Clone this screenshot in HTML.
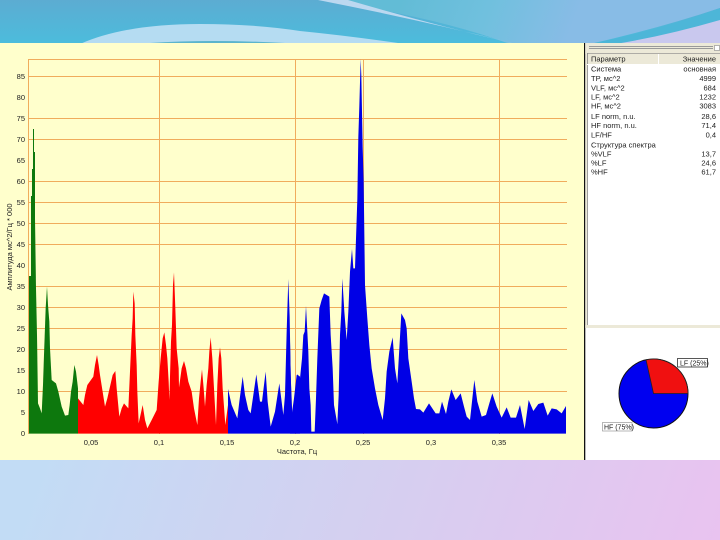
<!DOCTYPE html>
<html><head><meta charset="utf-8"><style>
html,body{margin:0;padding:0;background:#cfd4f0}
svg{display:block}
text{font-family:"Liberation Sans",sans-serif;font-size:7.5px;fill:#222}
</style></head><body>
<svg width="720" height="540" viewBox="0 0 720 540" xmlns="http://www.w3.org/2000/svg">
<defs>
<linearGradient id="bot" gradientUnits="userSpaceOnUse" x1="60" y1="400" x2="690" y2="620"><stop offset="0" stop-color="#c2dcf5"/><stop offset=".5" stop-color="#d5cff0"/><stop offset="1" stop-color="#e9c3f0"/></linearGradient>
<linearGradient id="top" gradientUnits="userSpaceOnUse" x1="0" y1="0" x2="0" y2="43"><stop offset="0" stop-color="#5cacd2"/><stop offset="1" stop-color="#4cbcdc"/></linearGradient>
<linearGradient id="top2" gradientUnits="userSpaceOnUse" x1="400" y1="0" x2="560" y2="60"><stop offset="0" stop-color="#62bcd6"/><stop offset=".5" stop-color="#70c0de"/><stop offset="1" stop-color="#88bce6"/></linearGradient>
<filter id="b"><feGaussianBlur stdDeviation="0.3"/></filter>
</defs>
<rect width="720" height="540" fill="url(#bot)"/>
<rect width="720" height="44" fill="url(#top)"/>
<path d="M80 44Q125 24 200 24Q255 24 300 31Q350 36 405 44Z" fill="#b5dcf2"/>
<path d="M150 43Q210 39 285 43Z" fill="#5bb4cc"/>
<path d="M318 0H720V8Q660 28 590 44H510Q430 15 318 0Z" fill="url(#top2)"/>
<path d="M318 0H348Q430 24 512 43Q420 20 318 0Z" fill="#bcd8f0"/>
<path d="M590 44Q660 30 720 8V20Q665 36 615 44Z" fill="#4db6d8"/>
<path d="M615 44Q665 36 720 20V44Z" fill="#c9c8ee"/>
<rect x="0" y="43" width="584" height="417" fill="#ffffcc"/>
<g stroke="#f0ac5c" stroke-width="1" fill="none">
<path d="M28 59.500H567M28 76.500H567M28 118.500H567M28 139.500H567M28 181.500H567M28 202.500H567M28 223.500H567M28 244.500H567M28 286.500H567M28 307.500H567M28 328.500H567M28 349.500H567M28 391.500H567"/>
<path d="M28.500 59V434M159.500 59V434M295.500 59V434M363.500 59V434M499.500 59V434"/>
</g>
<g filter="url(#b)">
<g transform="translate(0,225) scale(.33333)">
<polygon fill="#0a780a" points="87,626 87,153 93,153 93,-87 96,-87 96,-168 99,-168 99,-288 102,-288 102,-219 105,-219 105,-20 108,190 111,330 114,535 120,550 125,565 129,480 132,390 137,250 141,185 144,240 148,290 150,370 155,465 168,475 175,500 185,545 195,572 205,570 209,540 213,500 218,470 223,420 228,440 234,490 234,626"/>
<polygon fill="#ff0000" points="234,626 234,520 250,540 255,510 262,480 280,455 285,420 291,390 296,420 300,450 315,545 322,520 330,485 338,450 346,438 350,490 358,575 365,550 372,535 385,550 390,440 395,330 398,280 400,200 404,235 406,330 410,420 412,500 416,595 428,540 435,585 442,610 455,585 470,555 476,470 482,400 488,340 493,322 498,360 502,400 506,470 508,525 513,350 516,300 519,180 522,142 526,250 530,370 536,430 537,488 545,430 552,408 558,430 565,470 575,500 582,550 592,600 597,520 602,470 606,433 611,490 615,545 620,480 625,430 628,380 632,337 637,400 642,490 648,600 652,480 656,400 660,367 664,400 668,490 676,600 680,570 684,540 684,626"/>
<polygon fill="#0000e6" points="684,626 684,492 695,540 712,580 718,530 728,455 735,510 745,555 752,565 760,510 769,448 780,530 786,530 792,480 797,440 803,530 812,605 825,560 838,475 850,570 855,510 860,320 865,162 869,275 872,450 877,570 884,520 891,448 900,455 900,626"/>
</g>
<g transform="translate(290,225) scale(.33333)">
<polygon fill="#0000e6" points="0,626 0,350 5,570 12,520 20,450 30,460 36,400 40,330 44,320 48,243 52,320 55,380 58,490 62,540 64,620 74,620 78,520 82,400 88,250 95,225 102,205 118,215 122,330 128,430 132,540 142,597 146,510 150,330 154,260 157,160 163,260 170,345 175,260 180,140 186,72 190,130 195,130 199,12 202,-78 205,-264 208,-357 212,-498 214,-447 218,-234 221,-129 225,180 232,280 238,360 245,430 255,490 265,540 278,585 285,520 290,440 298,380 308,337 315,430 322,475 328,370 334,265 345,285 350,310 355,400 365,470 372,520 378,552 390,553 400,563 417,535 437,565 448,565 456,530 468,567 475,530 484,493 497,525 512,505 522,545 530,575 540,585 546,530 553,465 562,530 575,575 588,570 598,535 607,505 620,545 635,578 650,547 662,578 678,578 690,540 704,612 716,525 730,558 745,537 760,533 773,572 785,550 800,553 815,565 828,543 828,626"/>
</g>
<g text-anchor="end">
<text x="25" y="79">85</text><text x="25" y="100">80</text><text x="25" y="121">75</text><text x="25" y="142">70</text><text x="25" y="163">65</text><text x="25" y="184">60</text><text x="25" y="205">55</text><text x="25" y="226">50</text><text x="25" y="247">45</text><text x="25" y="268">40</text><text x="25" y="289">35</text><text x="25" y="310">30</text><text x="25" y="331">25</text><text x="25" y="352">20</text><text x="25" y="373">15</text><text x="25" y="394">10</text><text x="25" y="415">5</text><text x="25" y="436">0</text>
</g>
<g text-anchor="middle">
<text x="91" y="445">0,05</text><text x="159" y="445">0,1</text><text x="227" y="445">0,15</text><text x="295" y="445">0,2</text><text x="363" y="445">0,25</text><text x="431" y="445">0,3</text><text x="499" y="445">0,35</text>
<text x="297" y="454">Частота, Гц</text>
<text transform="translate(12,247) rotate(-90)">Амплитуда мс^2/Гц * 000</text>
</g>
</g>
<rect x="584" y="43" width="136" height="417" fill="#fff"/>
<rect x="584" y="43" width="1.300" height="417" fill="#111"/>
<rect x="585.300" y="43" width="135" height="11" fill="#ece9d8"/>
<rect x="585.300" y="43" width="2" height="285" fill="#ece9d8"/>
<path d="M589 46.500H713M589 48.500H713" stroke="#999" stroke-width="1"/>
<rect x="714.500" y="45.500" width="5" height="5" fill="#fff" stroke="#888" stroke-width=".6"/>
<rect x="587" y="53" width="133" height="11" fill="#ece9d8"/>
<path d="M587.500 53V327" stroke="#777" stroke-width=".7"/>
<path d="M587 53.300H720" stroke="#888" stroke-width=".6"/>
<path d="M658.500 54V64M587 64.500H720" stroke="#fff" stroke-width="1"/>
<rect x="585.300" y="325" width="135" height="3" fill="#ece9d8"/>
<g filter="url(#b)">
<text x="591" y="61.500">Параметр</text><text x="716" y="61.500" text-anchor="end">Значение</text>
<text x="591" y="71.500">Система</text><text x="716" y="71.500" text-anchor="end">основная</text>
<text x="591" y="81">TP, мс^2</text><text x="716" y="81" text-anchor="end">4999</text>
<text x="591" y="90.500">VLF, мс^2</text><text x="716" y="90.500" text-anchor="end">684</text>
<text x="591" y="99.500">LF, мс^2</text><text x="716" y="99.500" text-anchor="end">1232</text>
<text x="591" y="108.500">HF, мс^2</text><text x="716" y="108.500" text-anchor="end">3083</text>
<text x="591" y="119">LF norm, n.u.</text><text x="716" y="119" text-anchor="end">28,6</text>
<text x="591" y="128">HF norm, n.u.</text><text x="716" y="128" text-anchor="end">71,4</text>
<text x="591" y="137.500">LF/HF</text><text x="716" y="137.500" text-anchor="end">0,4</text>
<text x="591" y="147.500">Структура спектра</text>
<text x="591" y="156.500">%VLF</text><text x="716" y="156.500" text-anchor="end">13,7</text>
<text x="591" y="165.500">%LF</text><text x="716" y="165.500" text-anchor="end">24,6</text>
<text x="591" y="174.500">%HF</text><text x="716" y="174.500" text-anchor="end">61,7</text>
</g>
<circle cx="653.500" cy="393.500" r="34.500" fill="#0000f0" stroke="#111" stroke-width="1"/>
<path d="M653.500 393.500L688 393.500A34.500 34.500 0 0 0 646 359.800Z" fill="#f01010" stroke="#222" stroke-width=".8"/>
<rect x="677.500" y="358.500" width="30" height="8.500" fill="#fff" stroke="#111" stroke-width=".7"/>
<rect x="602.500" y="422.500" width="29.500" height="8.500" fill="#fff" stroke="#999" stroke-width=".7"/>
<g filter="url(#b)">
<text x="680" y="365.500" style="font-size:7px">LF (25%)</text>
<text x="604" y="429.500" style="font-size:7px">HF (75%)</text>
</g>
</svg>
</body></html>
